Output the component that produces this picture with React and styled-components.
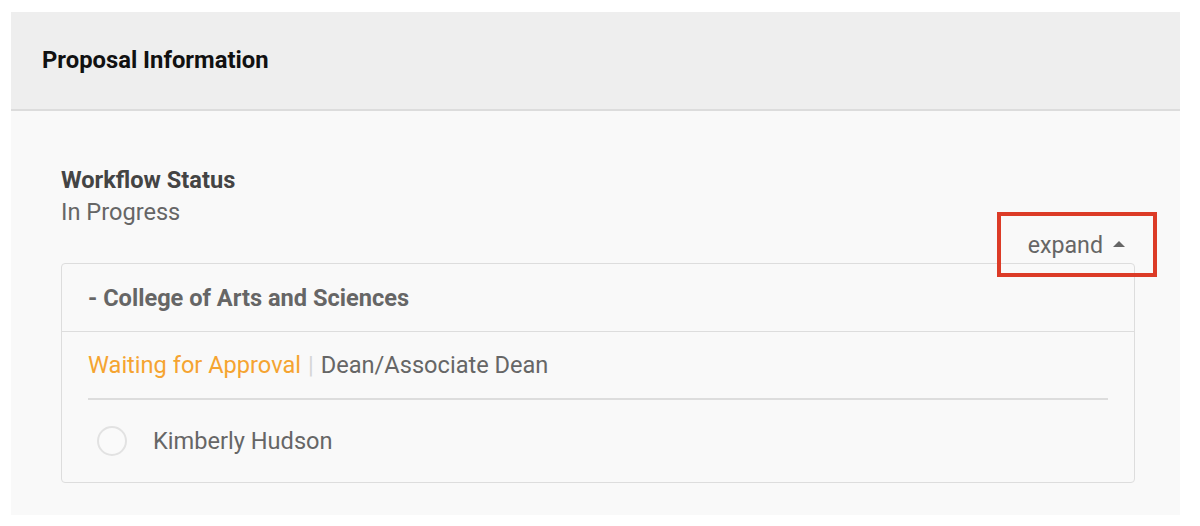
import React from 'react';
import styled, { createGlobalStyle } from 'styled-components';

const GlobalStyle = createGlobalStyle`
  html, body {
    margin: 0;
    padding: 0;
    background: #ffffff;
    font-family: Roboto, "Liberation Sans", Arial, sans-serif;
  }
`;

const approvers = [{ name: 'Kimberly Hudson' }];

const App = () => {
  return (
    <Page>
      <GlobalStyle />
      <Panel>
        <PanelHeader>
          <PanelTitle>Proposal Information</PanelTitle>
        </PanelHeader>
        <PanelBody>
          <FieldLabel>Workflow Status</FieldLabel>
          <FieldValue>In Progress</FieldValue>
          <ExpandRow>
            <ExpandButton type="button">
              expand
              <Caret />
            </ExpandButton>
          </ExpandRow>
          <Card>
            <CardHeader>- College of Arts and Sciences</CardHeader>
            <CardBody>
              <StepLine>
                <StepState>Waiting for Approval</StepState>
                <Pipe>|</Pipe>
                <StepRole>Dean/Associate Dean</StepRole>
              </StepLine>
              {approvers.map((a) => (
                <ApproverRow key={a.name}>
                  <Radio />
                  <ApproverName>{a.name}</ApproverName>
                </ApproverRow>
              ))}
            </CardBody>
          </Card>
        </PanelBody>
      </Panel>
    </Page>
  );
};

const Page = styled.div`
  padding: 12px 20px 11px 11px;
`;

const Panel = styled.section`
  background: #f9f9f9;
`;

const PanelHeader = styled.header`
  height: 97px;
  display: flex;
  align-items: center;
  padding: 0 31px;
  background: #eeeeee;
  border-bottom: 2px solid #dcdcdc;
`;

const PanelTitle = styled.h2`
  margin: 0;
  font-size: 23.8px;
  font-weight: 700;
  color: #111111;
  margin-top: -2px;
`;

const PanelBody = styled.div`
  padding: 53px 45px 32px 50px;
`;

const FieldLabel = styled.div`
  font-size: 23.6px;
  font-weight: 700;
  line-height: 32px;
  color: #444444;
`;

const FieldValue = styled.div`
  font-size: 23.6px;
  line-height: 32px;
  color: #666666;
`;

const ExpandRow = styled.div`
  position: relative;
  z-index: 1;
  display: flex;
  justify-content: flex-end;
  margin: -16px -22px -14px 0;
`;

const ExpandButton = styled.button`
  height: 65px;
  box-sizing: border-box;
  display: flex;
  align-items: center;
  gap: 10px;
  padding: 0 28px 0 27px;
  background: transparent;
  border: 4px solid #dc3b27;
  font-family: inherit;
  font-size: 23.2px;
  color: #666666;
  cursor: pointer;
`;

const Caret = styled.span`
  width: 0;
  height: 0;
  border-left: 6.5px solid transparent;
  border-right: 6.5px solid transparent;
  border-bottom: 6px solid #666666;
  margin-top: -2px;
`;

const Card = styled.div`
  border: 1px solid #dddddd;
  border-radius: 4px;
  background: #f9f9f9;
`;

const CardHeader = styled.div`
  height: 67px;
  display: flex;
  align-items: center;
  padding: 0 26px;
  border-bottom: 1px solid #dddddd;
  font-size: 23.6px;
  font-weight: 700;
  color: #666666;
`;

const CardBody = styled.div`
  padding: 0 26px;
`;

const StepLine = styled.div`
  height: 66px;
  display: flex;
  align-items: center;
  border-bottom: 2px solid #dddddd;
  font-size: 23.6px;
`;

const StepState = styled.span`
  color: #f5a431;
`;

const Pipe = styled.span`
  color: #d6d6d6;
  margin: 0 7px;
`;

const StepRole = styled.span`
  color: #666666;
`;

const ApproverRow = styled.div`
  height: 82px;
  display: flex;
  align-items: center;
  gap: 26px;
  padding-left: 9px;
`;

const Radio = styled.span`
  width: 30px;
  height: 30px;
  box-sizing: border-box;
  border: 2px solid #e2e2e2;
  border-radius: 50%;
  background: #fafafa;
`;

const ApproverName = styled.span`
  font-size: 23.6px;
  color: #666666;
`;

export default App;
